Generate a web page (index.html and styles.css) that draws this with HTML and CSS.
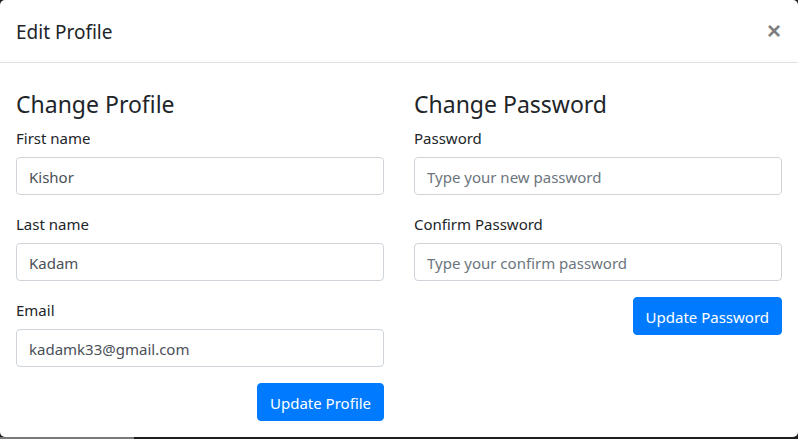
FILE: index.html
```html
<!DOCTYPE html>
<html>
<head>
<meta charset="utf-8">
<link rel="stylesheet" href="styles.css">
</head>
<body>
<div class="modal">
  <div class="modal-header">
    <h5 class="modal-title">Edit Profile</h5>
    <button class="close" type="button">&times;</button>
  </div>
  <div class="modal-body">
    <div class="row">
      <div class="col">
        <h4>Change Profile</h4>
        <div class="form-group">
          <label>First name</label>
          <input class="form-control" type="text" value="Kishor">
        </div>
        <div class="form-group">
          <label>Last name</label>
          <input class="form-control" type="text" value="Kadam">
        </div>
        <div class="form-group">
          <label>Email</label>
          <input class="form-control" type="text" value="kadamk33@gmail.com">
        </div>
        <div class="actions"><button class="btn" type="button">Update Profile</button></div>
      </div>
      <div class="col">
        <h4>Change Password</h4>
        <div class="form-group">
          <label>Password</label>
          <input class="form-control" type="password" placeholder="Type your new password">
        </div>
        <div class="form-group">
          <label>Confirm Password</label>
          <input class="form-control" type="password" placeholder="Type your confirm password">
        </div>
        <div class="actions"><button class="btn" type="button">Update Password</button></div>
      </div>
    </div>
  </div>
</div>
<div class="backdrop-strip">
  <div class="strip-left"></div>
  <div class="strip-right"></div>
</div>
</body>
</html>
```
FILE: styles.css
```css
* { box-sizing: border-box; }
html, body { margin: 0; padding: 0; }
body {
  width: 798px;
  height: 439px;
  overflow: hidden;
  background: #1d1d1d;
  font-family: "Segoe UI", "Noto Sans", "Open Sans", sans-serif;
  font-size: 15px;
  color: #212529;
}
.modal {
  height: 437px;
  background: #fff;
  border-radius: 5px;
  overflow: hidden;
}
.modal-header {
  height: 63px;
  display: flex;
  align-items: center;
  justify-content: space-between;
  padding: 0 16px;
  border-bottom: 1px solid #dee2e6;
}
.modal-title {
  margin: 0;
  padding-top: 2px;
  font-size: 19px;
  font-weight: 400;
  line-height: 30px;
}
.close {
  border: 0;
  background: transparent;
  padding: 0;
  font-family: "Liberation Sans", Arial, sans-serif;
  font-size: 24px;
  font-weight: 700;
  color: #000;
  opacity: .5;
  line-height: 1;
  margin-right: 1px;
}
.modal-body {
  padding: 25px 16px 16px;
}
.row {
  display: flex;
  gap: 30px;
}
.col {
  flex: 1;
  display: flex;
  flex-direction: column;
}
h4 {
  margin: 2px 0 6px;
  font-size: 23px;
  font-weight: 400;
  line-height: 29px;
}
.form-group {
  margin-bottom: 16px;
}
label {
  display: block;
  line-height: 24px;
  padding-top: 1px;
  margin-bottom: 7px;
}
.form-control {
  display: block;
  width: 100%;
  height: 38px;
  padding: 7px 12px 5px;
  font-family: inherit;
  font-size: 15px;
  color: #495057;
  border: 1px solid #ced4da;
  border-radius: 4px;
  background: #fff;
}
.form-control::placeholder { color: #6c757d; }
.actions {
  display: flex;
  justify-content: flex-end;
}
.btn {
  height: 38px;
  padding: 2px 12px 0;
  font-family: inherit;
  font-size: 15px;
  color: #fff;
  background: #007bff;
  border: 1px solid #007bff;
  border-radius: 4px;
}
.backdrop-strip {
  display: flex;
  height: 2px;
}
.strip-left { width: 134px; background: #7a7a7a; }
.strip-right { flex: 1; background: #1d1d1d; }
```
